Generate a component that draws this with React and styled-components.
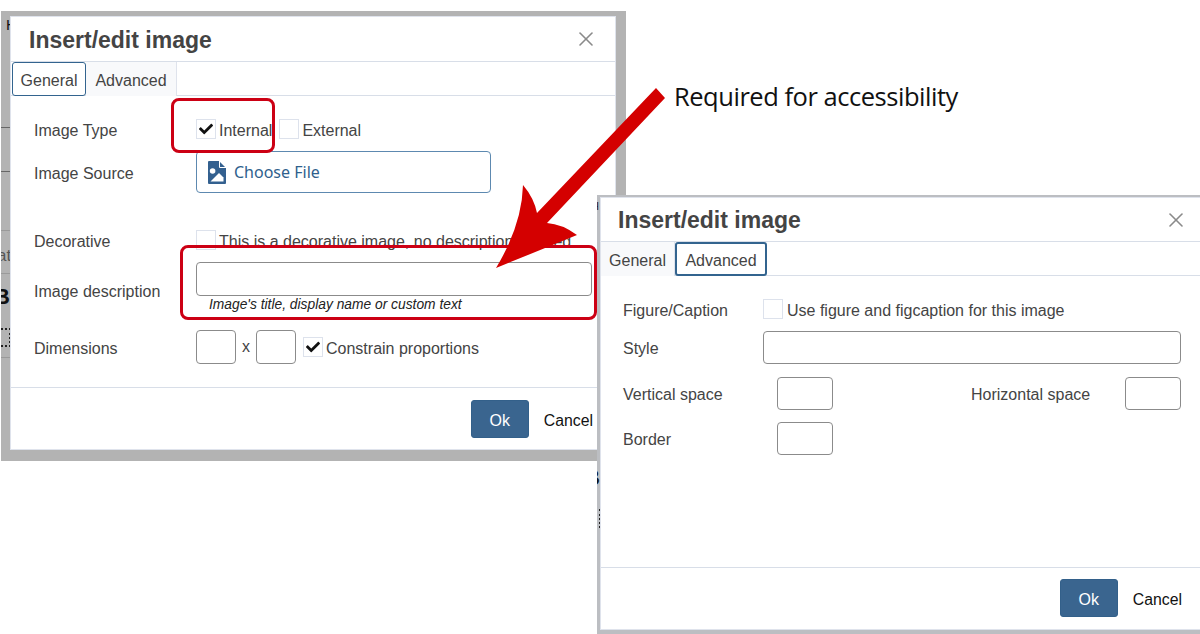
import styled, { createGlobalStyle } from "styled-components";
import { FaCheck } from "react-icons/fa";
import { X } from "lucide-react";

const GlobalStyle = createGlobalStyle`
  html, body {
    margin: 0;
    background: #fff;
    font-family: "Liberation Sans", Arial, sans-serif;
  }
`;

const Canvas = styled.div`
  position: relative;
  width: 1200px;
  height: 634px;
  overflow: hidden;
  background: #fff;
`;

// the screenshots sit on the canvas like two loose windows
const Shot = styled.div`
  position: absolute;
  left: ${(p) => p.$left}px;
  top: ${(p) => p.$top}px;
  width: ${(p) => p.$width}px;
  height: ${(p) => p.$height}px;
  padding: ${(p) => p.$pad};
  box-sizing: border-box;
  display: flex;
  overflow: hidden;
  background: ${(p) => p.$bg};
`;

const BehindLine = styled.div`
  position: absolute;
  left: 0;
  top: ${(p) => p.$top}px;
  width: 12px;
  height: 1px;
  background: ${(p) => p.$color || "#8e8e8e"};
`;

const BehindText = styled.span`
  position: absolute;
  left: ${(p) => p.$left}px;
  top: ${(p) => p.$top}px;
  font-size: ${(p) => p.$size}px;
  font-weight: ${(p) => (p.$bold ? 700 : 400)};
  line-height: 1;
  color: ${(p) => p.$color || "#222"};
  white-space: nowrap;
`;

// dotted selection handle of the page behind the dialog
const BehindDots = styled.div`
  position: absolute;
  left: ${(p) => p.$left}px;
  top: ${(p) => p.$top}px;
  width: 14px;
  height: 15px;
  border: 2px dotted #222;
`;

const Dialog = styled.div`
  position: relative;
  flex: 1;
  display: flex;
  flex-direction: column;
  background: #fff;
  box-sizing: border-box;
  border: 1px solid #dfe3ec;
  border-right-width: ${(p) => (p.$open ? 0 : 1)}px;
  min-width: 0;
`;

const Header = styled.div`
  height: ${(p) => p.$height}px;
  flex: none;
  box-sizing: border-box;
  display: flex;
  align-items: center;
  justify-content: space-between;
  padding: 0 ${(p) => p.$right}px 0 ${(p) => p.$left}px;
  border-bottom: 1px solid #d8dee8;
`;

const Title = styled.h1`
  margin: 2px 0 0;
  font-size: 23px;
  font-weight: 700;
  color: #444;
`;

const CloseIcon = styled(X)`
  color: #8a8a8a;
  display: block;
`;

const TabBar = styled.div`
  height: 34px;
  flex: none;
  box-sizing: border-box;
  display: flex;
  padding-left: ${(p) => p.$left}px;
  border-bottom: 1px solid #d8dee8;
`;

const Tab = styled.div`
  width: ${(p) => p.$width}px;
  height: 34px;
  box-sizing: border-box;
  display: flex;
  align-items: center;
  justify-content: center;
  padding-top: 4px;
  font-size: 16px;
  color: #444;
  background: ${(p) => (p.$edge ? "#fff" : "#f8f9fb")};
  border: ${(p) => (p.$edge ? `${p.$edge}px solid #33648f` : "none")};
  border-right: ${(p) => (p.$edge ? `${p.$edge}px solid #33648f` : "1px solid #dfe3ec")};
  border-radius: ${(p) => (p.$edge ? "3px" : "0")};
`;

const Body = styled.div`
  flex: 1;
  display: flex;
  flex-direction: column;
  padding: 23px 0 0 ${(p) => p.$left}px;
  min-height: 0;
`;

const Row = styled.div`
  display: flex;
  align-items: center;
  margin-top: ${(p) => p.$gap || 0}px;
`;

const Label = styled.div`
  width: ${(p) => p.$width}px;
  flex: none;
  font-size: 16px;
  line-height: 16px;
  color: #444;
  padding-top: ${(p) => p.$drop || 3}px;
  white-space: nowrap;
`;

const Box = styled.span`
  width: 20px;
  height: 20px;
  flex: none;
  box-sizing: border-box;
  display: flex;
  align-items: center;
  justify-content: center;
  border: 1.5px solid #dde2ec;
  color: #111;
  margin-left: ${(p) => p.$left || 0}px;
`;

const BoxText = styled.span`
  margin-left: ${(p) => p.$gap || 3}px;
  padding-top: 3px;
  font-size: 16px;
  line-height: 16px;
  color: #444;
  white-space: nowrap;
`;

const Input = styled.div`
  width: ${(p) => p.$width}px;
  height: ${(p) => p.$height}px;
  flex: none;
  box-sizing: border-box;
  background: #fff;
  border: 1.5px solid #8b8b8b;
  border-radius: 4px;
`;

const FilePicker = styled.div`
  width: 295px;
  height: 42px;
  box-sizing: border-box;
  display: flex;
  align-items: center;
  gap: 8px;
  padding-left: 11px;
  border: 1.5px solid #5d89b0;
  border-radius: 4px;
  color: #2f5f8d;
  font-family: "Noto Sans", sans-serif;
  font-size: 16px;
`;

const Stack = styled.div`
  display: flex;
  flex-direction: column;
`;

const Hint = styled.div`
  height: 17px;
  line-height: 17px;
  padding-left: 13px;
  font-size: 13.8px;
  font-style: italic;
  color: #222;
`;

const Times = styled.span`
  width: 20px;
  text-align: center;
  font-size: 16px;
  color: #444;
`;

const Spacer = styled.div`
  width: ${(p) => p.$width}px;
  flex: none;
`;

const Footer = styled.div`
  flex: none;
  height: 62px;
  box-sizing: border-box;
  display: flex;
  align-items: flex-start;
  justify-content: flex-end;
  gap: 15px;
  padding: ${(p) => p.$top}px ${(p) => p.$right}px 0 0;
  border-top: 1px solid #d8dee8;
`;

const OkButton = styled.button`
  width: 58px;
  height: 38px;
  padding: 3px 0 0;
  font: 16px "Liberation Sans", Arial, sans-serif;
  color: #fff;
  background: #3a658f;
  border: 1px solid #33608a;
  border-radius: 3px;
`;

const CancelButton = styled.button`
  height: 38px;
  padding: 3px 0 0;
  font: 15.8px "Liberation Sans", Arial, sans-serif;
  color: #111;
  background: none;
  border: none;
`;

const Callout = styled.div`
  position: absolute;
  left: ${(p) => p.$left}px;
  top: ${(p) => p.$top}px;
  width: ${(p) => p.$width}px;
  height: ${(p) => p.$height}px;
  box-sizing: border-box;
  border: 3px solid #cc0014;
  border-radius: 8px;
`;

const ArrowArt = styled.svg`
  position: absolute;
  left: 0;
  top: 0;
`;

const Note = styled.div`
  position: absolute;
  left: 674px;
  top: 78px;
  font-family: "Open Sans", sans-serif;
  font-size: 25.5px;
  line-height: 36px;
  letter-spacing: -0.47px;
  color: #111;
  white-space: nowrap;
`;

const Check = () => <FaCheck size={14} />;

const FileIcon = () => (
  <svg width="18" height="23" viewBox="0 0 18 23" fill="none">
    <path d="M1 0H11L18 7V22Q18 23 17 23H1Q0 23 0 22V1Q0 0 1 0Z" fill="#33608f" />
    <path d="M11.5 0V6.5H18" stroke="#fff" strokeWidth="1" />
    <circle cx="4.6" cy="10" r="2.8" fill="#fff" />
    <path d="M2.5 20.5L11 12L15.5 16.5V20.5Z" fill="#fff" />
  </svg>
);

const App = () => {
  return (
    <Canvas>
      <GlobalStyle />

      <Shot $left={1} $top={11} $width={625} $height={450} $pad="5px 10px 11px 9px" $bg="#b3b3b3">
        <BehindText $left={5} $top={6} $size={15} $color="#111">H</BehindText>
        <BehindLine $top={116} $color="#666" />
        <BehindLine $top={160} $color="#666" />
        <BehindLine $top={219} $color="#9a9a9a" />
        <BehindText $left={-4} $top={236} $size={17} $color="#555">at</BehindText>
        <BehindLine $top={262} $color="#9a9a9a" />
        <BehindText $left={-7} $top={275} $size={22} $bold $color="#111">B</BehindText>
        <BehindDots $left={-8} $top={317} />
        <BehindLine $top={346} $color="#9a9a9a" />

        <Dialog>
          <Header $height={45} $left={18} $right={17}>
            <Title>Insert/edit image</Title>
            <CloseIcon size={24} strokeWidth={1.6} />
          </Header>
          <TabBar $left={1}>
            <Tab $edge={1.5} $width={74}>General</Tab>
            <Tab $width={91}>Advanced</Tab>
          </TabBar>
          <Body $left={23}>
            <Row>
              <Label $width={162}>Image Type</Label>
              <Box><Check /></Box>
              <BoxText>Internal</BoxText>
              <Box $left={7} />
              <BoxText>External</BoxText>
            </Row>
            <Row $gap={12}>
              <Label $width={162}>Image Source</Label>
              <FilePicker>
                <FileIcon />
                Choose File
              </FilePicker>
            </Row>
            <Row $gap={37}>
              <Label $width={162}>Decorative</Label>
              <Box />
              <BoxText>This is a decorative image, no description needed</BoxText>
            </Row>
            <Row $gap={12}>
              <Label $width={162} $drop={8}>Image description</Label>
              <Stack>
                <Input $width={396} $height={34} />
                <Hint>Image's title, display name or custom text</Hint>
              </Stack>
            </Row>
            <Row $gap={17}>
              <Label $width={162}>Dimensions</Label>
              <Input $width={40} $height={34} />
              <Times>x</Times>
              <Input $width={40} $height={34} />
              <Box $left={7}><Check /></Box>
              <BoxText>Constrain proportions</BoxText>
            </Row>
          </Body>
          <Footer $top={12} $right={22}>
            <OkButton>Ok</OkButton>
            <CancelButton>Cancel</CancelButton>
          </Footer>
        </Dialog>
      </Shot>

      <Callout $left={171} $top={98} $width={104} $height={55} />
      <Callout $left={180} $top={245} $width={417} $height={75} />

      <ArrowArt width="1200" height="634" viewBox="0 0 1200 634">
        <path
          d="M656 88 L665 98 L547 223 Q562 224 577 235 L496 268 Q522 225 523 185 Q534 198 537 213 Z"
          fill="#d40000"
        />
      </ArrowArt>

      <Note>Required for accessibility</Note>

      <Shot $left={597} $top={195} $width={603} $height={439} $pad="2px 0 4px 3px" $bg="#bcbec2">
        <BehindText $left={-6} $top={6} $size={11} $color="#222">H</BehindText>
        <BehindText $left={-13} $top={272} $size={22} $bold $color="#111">B</BehindText>
        <BehindDots $left={-14} $top={314} />

        <Dialog $open>
          <Header $height={44} $left={17} $right={12}>
            <Title>Insert/edit image</Title>
            <CloseIcon size={24} strokeWidth={1.6} />
          </Header>
          <TabBar $left={0}>
            <Tab $width={74}>General</Tab>
            <Tab $edge={2} $width={92}>Advanced</Tab>
          </TabBar>
          <Body $left={22}>
            <Row>
              <Label $width={140}>Figure/Caption</Label>
              <Box />
              <BoxText $gap={4}>Use figure and figcaption for this image</BoxText>
            </Row>
            <Row $gap={12}>
              <Label $width={140}>Style</Label>
              <Input $width={418} $height={33} />
            </Row>
            <Row $gap={13}>
              <Label $width={154}>Vertical space</Label>
              <Input $width={56} $height={33} />
              <Spacer $width={138} />
              <Label $width={154}>Horizontal space</Label>
              <Input $width={56} $height={33} />
            </Row>
            <Row $gap={12}>
              <Label $width={154}>Border</Label>
              <Input $width={56} $height={33} />
            </Row>
          </Body>
          <Footer $top={11} $right={18}>
            <OkButton>Ok</OkButton>
            <CancelButton>Cancel</CancelButton>
          </Footer>
        </Dialog>
      </Shot>
    </Canvas>
  );
};

export default App;
